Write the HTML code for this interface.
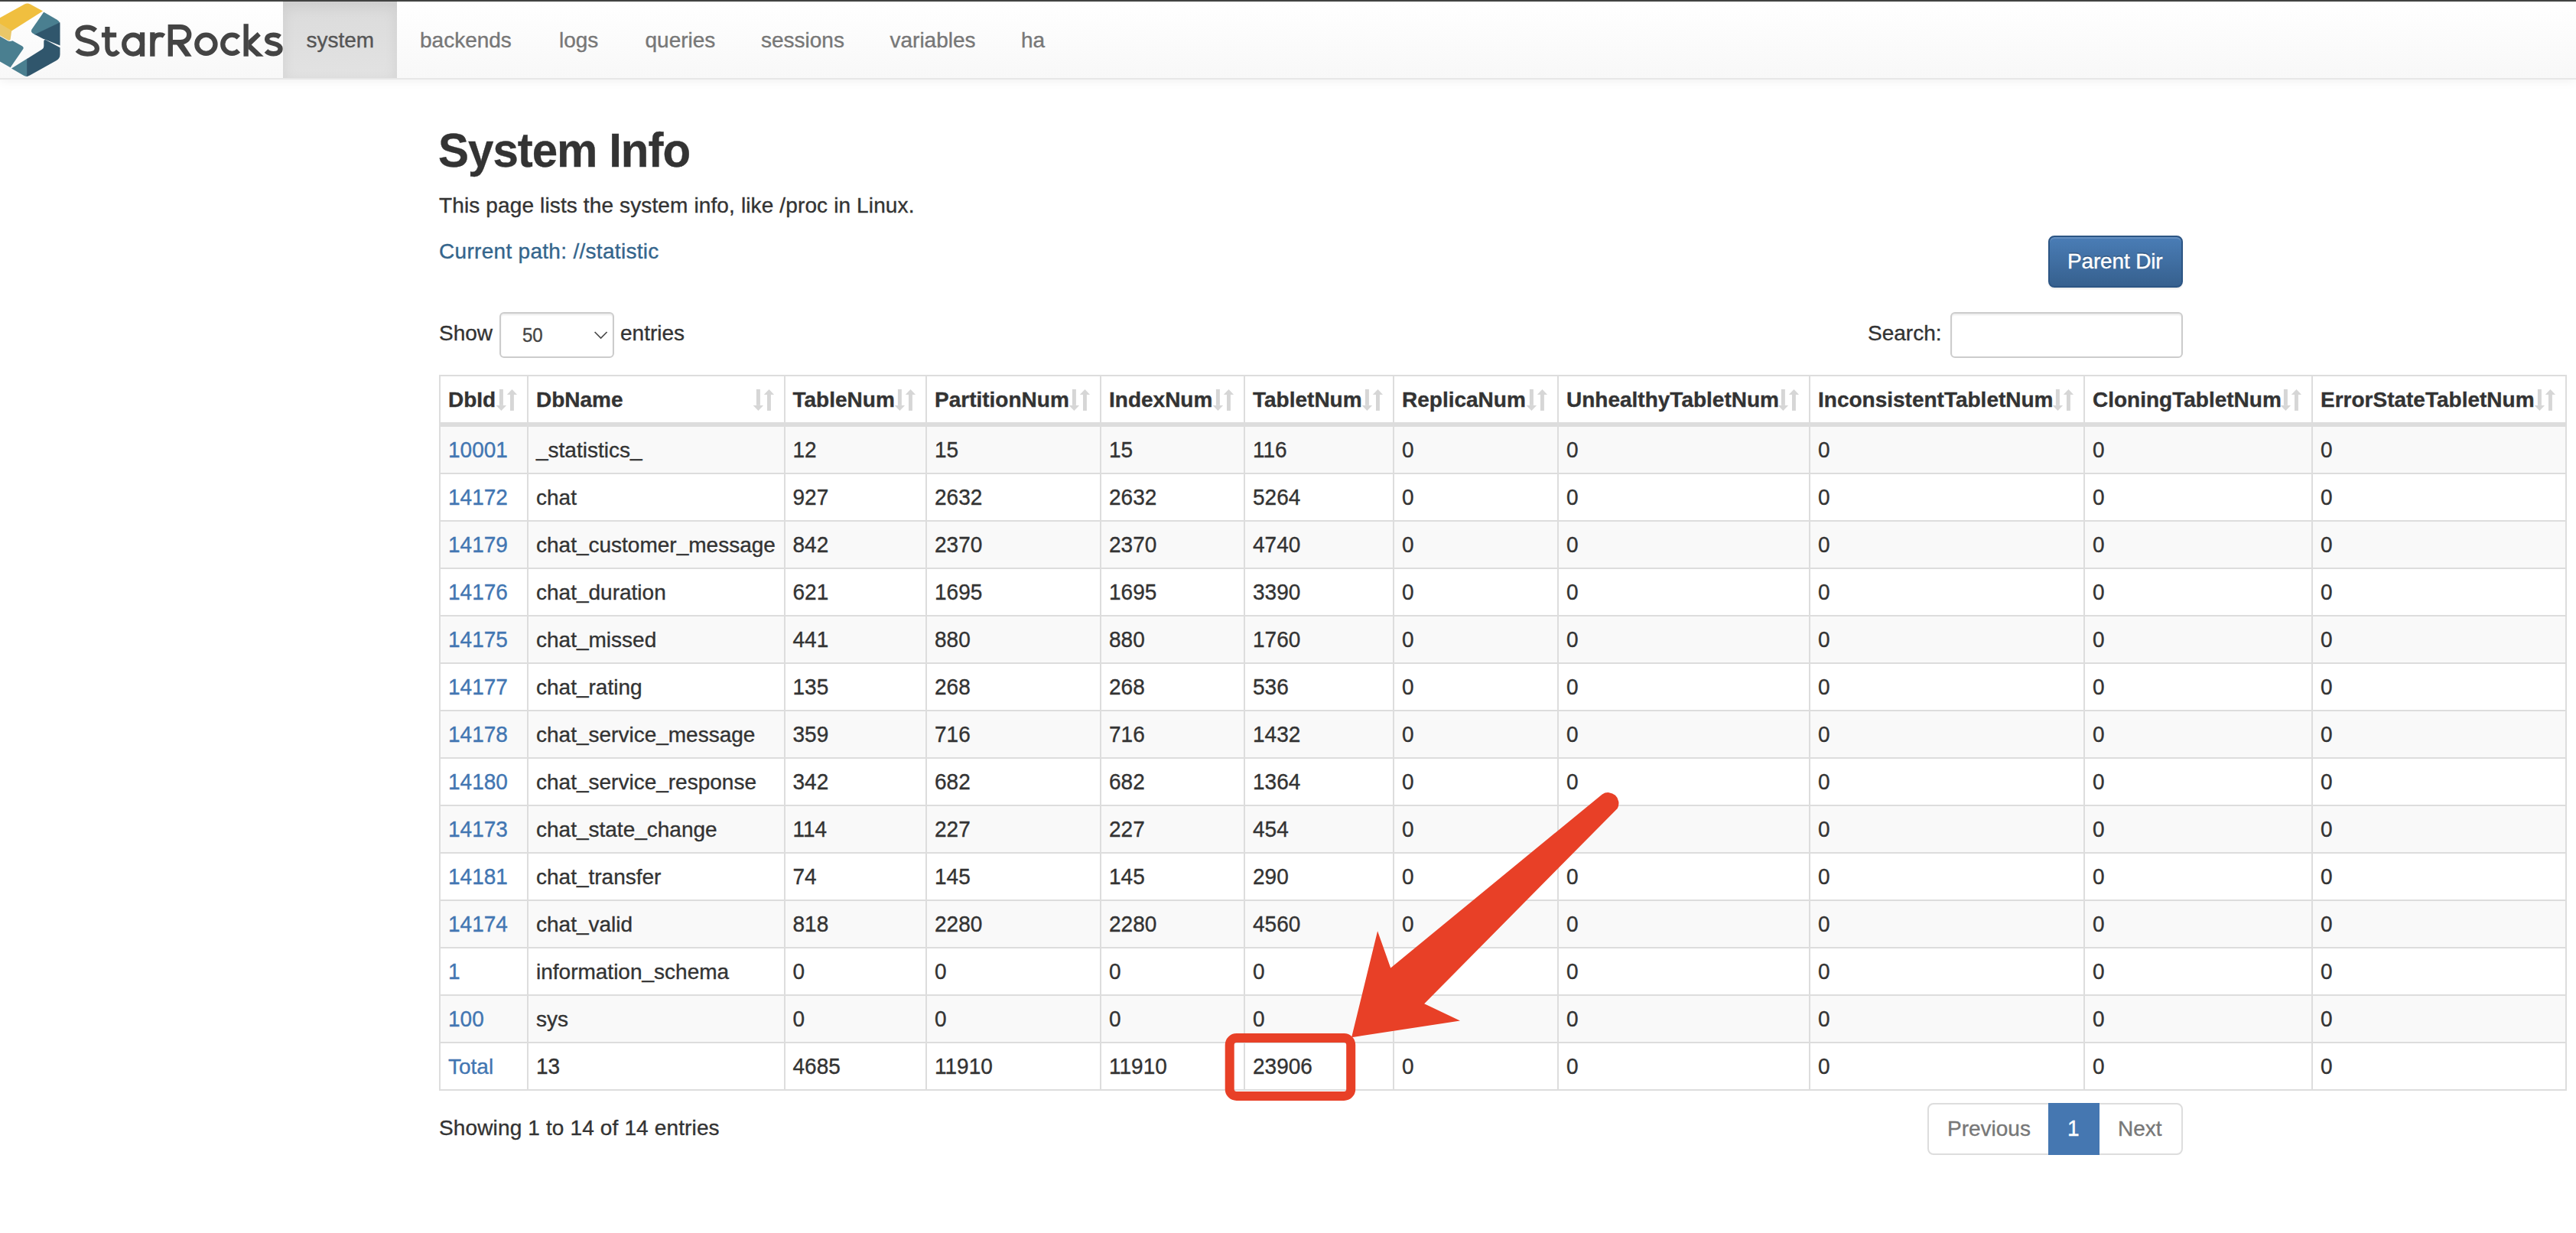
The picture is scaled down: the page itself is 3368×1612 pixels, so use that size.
<!DOCTYPE html>
<html><head><meta charset="utf-8"><title>StarRocks System Info</title><style>
*{margin:0;padding:0;box-sizing:border-box}
html,body{width:3368px;height:1612px;overflow:hidden;background:#fff}
body{position:relative;font-family:"Liberation Sans",sans-serif;color:#333}
.t{position:absolute;white-space:nowrap;-webkit-text-stroke-width:0.35px}
.abs{position:absolute}
</style></head><body>
<div class="abs" style="left:0;top:0;width:3368px;height:1px;background:#484948"></div><div class="abs" style="left:0;top:1px;width:3368px;height:1px;background:#3a3b3a"></div>
<div class="abs" style="left:0;top:2px;width:3368px;height:100px;background:linear-gradient(to bottom,#fff 0%,#f8f8f8 100%);box-shadow:0 2px 14px rgba(0,0,0,.08)"></div>
<div class="abs" style="left:0;top:102px;width:3368px;height:2px;background:#e7e7e7"></div>
<div class="abs" style="left:370px;top:2px;width:149px;height:100px;background:linear-gradient(to bottom,#dbdbdb 0%,#e2e2e2 100%);box-shadow:inset 0 6px 18px rgba(0,0,0,.075)"></div>
<div class="t " style="left:400.5px;top:33.30px;font-size:28px;line-height:40px;color:#555;font-weight:normal;">system</div>
<div class="t " style="left:549px;top:33.30px;font-size:28px;line-height:40px;color:#777;font-weight:normal;">backends</div>
<div class="t " style="left:731px;top:33.30px;font-size:28px;line-height:40px;color:#777;font-weight:normal;">logs</div>
<div class="t " style="left:843.5px;top:33.30px;font-size:28px;line-height:40px;color:#777;font-weight:normal;">queries</div>
<div class="t " style="left:995px;top:33.30px;font-size:28px;line-height:40px;color:#777;font-weight:normal;">sessions</div>
<div class="t " style="left:1163.5px;top:33.30px;font-size:28px;line-height:40px;color:#777;font-weight:normal;">variables</div>
<div class="t " style="left:1335px;top:33.30px;font-size:28px;line-height:40px;color:#777;font-weight:normal;">ha</div>
<svg class="abs" style="left:0;top:0" width="90" height="106" viewBox="0 0 90 106">
<path fill="#f0bf3f" d="M0 23.2 L32 5.6 Q35.7 3.6 39.5 5.6 L56 14.6 L15 40.6 L0 31.8 Z"/>
<path fill="#e9c768" d="M0 31.1 L15.2 39.9 L13.6 51.5 Q13 53.5 10.5 52.6 L0 46.5 Z"/>
<path fill="#4a7f90" d="M57.2 15.8 L74.5 25.8 Q77.5 27.6 78.2 30 L46 45.6 L42 43 Q40 41.3 41.3 38.8 Z"/>
<path fill="#30566c" d="M45.4 45.0 L78.4 29.2 Q78.5 31 78.5 33 L78.5 59.6 L55.5 50.3 Z"/>
<path fill="#4a7f90" d="M0 47.5 L10.5 53.6 Q13 54.5 16.5 53.2 L29 60.2 Q31.5 62 30.3 64 L13.6 88.3 L0 80.6 Z"/>
<path fill="#4a7f90" d="M15 89.6 L35.7 76.5 L35.7 99.9 Q33 100.2 31 98.8 Z"/>
<path fill="#30566c" d="M35.1 76.9 L55 64.5 Q57.3 63 57.3 60.5 L57.3 54 Q57.3 51.3 60 52.2 L78.5 62.3 L78.5 71 Q78.5 76.5 73.5 79.3 L39 98.6 Q36 100.2 35.1 100 Z"/>
</svg>
<svg class="abs" style="left:0;top:0" width="380" height="100" viewBox="0 0 380 100">
<g fill="none" stroke="#444" stroke-width="6.3">
<path d="M125 39.8 C121.5 36.8 118 35.65 113.5 35.65 C106.5 35.65 101.5 39 101.5 44.3 C101.5 49.5 106 51.3 113.5 53.3 C121.5 55.3 126.9 57.8 126.9 63.5 C126.9 68.5 121.5 70.65 114.3 70.65 C108.5 70.65 104 68.8 100.8 65.6"/>
<path d="M140.4 35 L140.4 61 C140.4 67.5 143.5 70.95 147.5 70.95 C150.5 70.95 152.5 69.5 154.5 67"/>
<path d="M132.9 45.7 L152.2 45.7"/>
<ellipse cx="174.1" cy="58.05" rx="11.9" ry="12.5"/>
<path d="M186.05 42.3 L186.05 73.8"/>
<path d="M199.35 73.8 L199.35 42.3 M199.35 58 C199.35 49 204 45.45 209 45.45 C211 45.45 213 46 214.5 47"/>
<path d="M222.8 73.7 L222.8 32.1 M222.8 35.25 L236 35.25 C242.5 35.25 247.25 39.5 247.25 45.25 C247.25 51 242.5 55.25 236 55.25 L222.8 55.25"/>
<circle cx="269.4" cy="57.75" r="12.1"/>
<path d="M311.9 49.2 A12.1 12.1 0 1 0 311.9 66.3"/>
<path d="M321.65 31.2 L321.65 73.7"/>
<path d="M366 48.2 C363.5 46.3 360.5 45.55 357.5 45.55 C352.5 45.55 349.15 47.8 349.15 51.2 C349.15 54.8 353 55.8 358 57 C363 58.2 366.55 59.8 366.55 63.8 C366.55 67.8 362.5 70.25 357.5 70.25 C353.5 70.25 350.3 69 348 66.5"/>
</g>
<g fill="#444">
<path d="M230.5 57.5 L239.8 57.5 L250.7 73.7 L242.3 73.7 Z"/>
<path d="M324.5 52.9 L336.7 42.0 L340.8 46.7 L328.7 58.5 L344.8 73.7 L335.2 73.7 L324.5 63.8 Z"/>
</g>
</svg>
<div class="t " style="left:573px;top:165.41px;font-size:60px;line-height:66px;color:#333;font-weight:bold;letter-spacing:-1.0px;transform:scaleY(1.04);transform-origin:0 53.79px;">System Info</div>
<div class="t " style="left:574px;top:248.60px;font-size:28px;line-height:40px;color:#333;font-weight:normal;letter-spacing:0.13px;">This page lists the system info, like /proc in Linux.</div>
<div class="t " style="left:574px;top:308.90px;font-size:28px;line-height:40px;color:#34658c;font-weight:normal;letter-spacing:0.3px;">Current path: //statistic</div>
<div class="abs" style="left:2678px;top:308px;width:176px;height:68px;border:2px solid #2c5584;border-radius:8px;background:linear-gradient(to bottom,#4a7db6 0%,#36608e 100%);box-shadow:inset 0 2px 0 rgba(255,255,255,.15),0 2px 2px rgba(0,0,0,.075)"></div>
<div class="t " style="left:2703px;top:321.50px;font-size:28px;line-height:40px;color:#fff;font-weight:normal;letter-spacing:-0.15px;text-shadow:0 -2px 0 rgba(0,0,0,.2);">Parent Dir</div>
<div class="t " style="left:574px;top:415.50px;font-size:28px;line-height:40px;color:#333;font-weight:normal;">Show</div>
<div class="abs" style="left:653px;top:408px;width:150px;height:60px;border:2px solid #ccc;border-radius:6px;background:#fff;box-shadow:inset 0 2px 2px rgba(0,0,0,.075)"></div>
<div class="t " style="left:683px;top:419.48px;font-size:24px;line-height:40px;color:#444;font-weight:normal;transform:scaleY(1.04);transform-origin:0 28.32px;">50</div>
<svg class="abs" style="left:776px;top:430px" width="20" height="16" viewBox="0 0 20 16"><path d="M1.6 4 L9.6 12 L17.6 4" fill="none" stroke="#4a4a4a" stroke-width="1.7"/></svg>
<div class="t " style="left:811px;top:415.50px;font-size:28px;line-height:40px;color:#333;font-weight:normal;">entries</div>
<div class="t " style="left:2442px;top:416.10px;font-size:28px;line-height:40px;color:#333;font-weight:normal;">Search:</div>
<div class="abs" style="left:2550px;top:408px;width:304px;height:60px;border:2px solid #ccc;border-radius:6px;background:#fff;box-shadow:inset 0 2px 2px rgba(0,0,0,.075)"></div>
<div class="abs" style="left:574px;top:558px;width:2780px;height:60px;background:#f9f9f9"></div>
<div class="abs" style="left:574px;top:682px;width:2780px;height:60px;background:#f9f9f9"></div>
<div class="abs" style="left:574px;top:806px;width:2780px;height:60px;background:#f9f9f9"></div>
<div class="abs" style="left:574px;top:930px;width:2780px;height:60px;background:#f9f9f9"></div>
<div class="abs" style="left:574px;top:1054px;width:2780px;height:60px;background:#f9f9f9"></div>
<div class="abs" style="left:574px;top:1178px;width:2780px;height:60px;background:#f9f9f9"></div>
<div class="abs" style="left:574px;top:1302px;width:2780px;height:60px;background:#f9f9f9"></div>
<div class="abs" style="left:574px;top:490px;width:2782px;height:2px;background:#dddddd"></div>
<div class="abs" style="left:574px;top:552px;width:2782px;height:6px;background:#dddddd"></div>
<div class="abs" style="left:574px;top:618px;width:2782px;height:2px;background:#dddddd"></div>
<div class="abs" style="left:574px;top:680px;width:2782px;height:2px;background:#dddddd"></div>
<div class="abs" style="left:574px;top:742px;width:2782px;height:2px;background:#dddddd"></div>
<div class="abs" style="left:574px;top:804px;width:2782px;height:2px;background:#dddddd"></div>
<div class="abs" style="left:574px;top:866px;width:2782px;height:2px;background:#dddddd"></div>
<div class="abs" style="left:574px;top:928px;width:2782px;height:2px;background:#dddddd"></div>
<div class="abs" style="left:574px;top:990px;width:2782px;height:2px;background:#dddddd"></div>
<div class="abs" style="left:574px;top:1052px;width:2782px;height:2px;background:#dddddd"></div>
<div class="abs" style="left:574px;top:1114px;width:2782px;height:2px;background:#dddddd"></div>
<div class="abs" style="left:574px;top:1176px;width:2782px;height:2px;background:#dddddd"></div>
<div class="abs" style="left:574px;top:1238px;width:2782px;height:2px;background:#dddddd"></div>
<div class="abs" style="left:574px;top:1300px;width:2782px;height:2px;background:#dddddd"></div>
<div class="abs" style="left:574px;top:1362px;width:2782px;height:2px;background:#dddddd"></div>
<div class="abs" style="left:574px;top:1424px;width:2782px;height:2px;background:#dddddd"></div>
<div class="abs" style="left:574px;top:490px;width:2px;height:936px;background:#dddddd"></div>
<div class="abs" style="left:689px;top:490px;width:2px;height:936px;background:#dddddd"></div>
<div class="abs" style="left:1024.5px;top:490px;width:2px;height:936px;background:#dddddd"></div>
<div class="abs" style="left:1210px;top:490px;width:2px;height:936px;background:#dddddd"></div>
<div class="abs" style="left:1438px;top:490px;width:2px;height:936px;background:#dddddd"></div>
<div class="abs" style="left:1626px;top:490px;width:2px;height:936px;background:#dddddd"></div>
<div class="abs" style="left:1821px;top:490px;width:2px;height:936px;background:#dddddd"></div>
<div class="abs" style="left:2036px;top:490px;width:2px;height:936px;background:#dddddd"></div>
<div class="abs" style="left:2365px;top:490px;width:2px;height:936px;background:#dddddd"></div>
<div class="abs" style="left:2724px;top:490px;width:2px;height:936px;background:#dddddd"></div>
<div class="abs" style="left:3022px;top:490px;width:2px;height:936px;background:#dddddd"></div>
<div class="abs" style="left:3354px;top:490px;width:2px;height:936px;background:#dddddd"></div>
<div class="t " style="left:586px;top:503.30px;font-size:28px;line-height:40px;color:#333;font-weight:bold;">DbId</div>
<svg class="abs" style="left:648px;top:508px" width="30" height="30" viewBox="0 0 30 30"><g fill="#d6d6d6"><rect x="4.9" y="0.9" width="5" height="21"/><path d="M0.7 21.9 L14.1 21.9 L7.4 29 Z"/><rect x="19" y="7.9" width="4.9" height="21"/><path d="M14.8 7.9 L28.1 7.9 L21.5 0.9 Z"/></g></svg>
<div class="t " style="left:701px;top:503.30px;font-size:28px;line-height:40px;color:#333;font-weight:bold;">DbName</div>
<svg class="abs" style="left:983.5px;top:508px" width="30" height="30" viewBox="0 0 30 30"><g fill="#d6d6d6"><rect x="4.9" y="0.9" width="5" height="21"/><path d="M0.7 21.9 L14.1 21.9 L7.4 29 Z"/><rect x="19" y="7.9" width="4.9" height="21"/><path d="M14.8 7.9 L28.1 7.9 L21.5 0.9 Z"/></g></svg>
<div class="t " style="left:1036.5px;top:503.30px;font-size:28px;line-height:40px;color:#333;font-weight:bold;">TableNum</div>
<svg class="abs" style="left:1169px;top:508px" width="30" height="30" viewBox="0 0 30 30"><g fill="#d6d6d6"><rect x="4.9" y="0.9" width="5" height="21"/><path d="M0.7 21.9 L14.1 21.9 L7.4 29 Z"/><rect x="19" y="7.9" width="4.9" height="21"/><path d="M14.8 7.9 L28.1 7.9 L21.5 0.9 Z"/></g></svg>
<div class="t " style="left:1222px;top:503.30px;font-size:28px;line-height:40px;color:#333;font-weight:bold;">PartitionNum</div>
<svg class="abs" style="left:1397px;top:508px" width="30" height="30" viewBox="0 0 30 30"><g fill="#d6d6d6"><rect x="4.9" y="0.9" width="5" height="21"/><path d="M0.7 21.9 L14.1 21.9 L7.4 29 Z"/><rect x="19" y="7.9" width="4.9" height="21"/><path d="M14.8 7.9 L28.1 7.9 L21.5 0.9 Z"/></g></svg>
<div class="t " style="left:1450px;top:503.30px;font-size:28px;line-height:40px;color:#333;font-weight:bold;">IndexNum</div>
<svg class="abs" style="left:1585px;top:508px" width="30" height="30" viewBox="0 0 30 30"><g fill="#d6d6d6"><rect x="4.9" y="0.9" width="5" height="21"/><path d="M0.7 21.9 L14.1 21.9 L7.4 29 Z"/><rect x="19" y="7.9" width="4.9" height="21"/><path d="M14.8 7.9 L28.1 7.9 L21.5 0.9 Z"/></g></svg>
<div class="t " style="left:1638px;top:503.30px;font-size:28px;line-height:40px;color:#333;font-weight:bold;">TabletNum</div>
<svg class="abs" style="left:1780px;top:508px" width="30" height="30" viewBox="0 0 30 30"><g fill="#d6d6d6"><rect x="4.9" y="0.9" width="5" height="21"/><path d="M0.7 21.9 L14.1 21.9 L7.4 29 Z"/><rect x="19" y="7.9" width="4.9" height="21"/><path d="M14.8 7.9 L28.1 7.9 L21.5 0.9 Z"/></g></svg>
<div class="t " style="left:1833px;top:503.30px;font-size:28px;line-height:40px;color:#333;font-weight:bold;">ReplicaNum</div>
<svg class="abs" style="left:1995px;top:508px" width="30" height="30" viewBox="0 0 30 30"><g fill="#d6d6d6"><rect x="4.9" y="0.9" width="5" height="21"/><path d="M0.7 21.9 L14.1 21.9 L7.4 29 Z"/><rect x="19" y="7.9" width="4.9" height="21"/><path d="M14.8 7.9 L28.1 7.9 L21.5 0.9 Z"/></g></svg>
<div class="t " style="left:2048px;top:503.30px;font-size:28px;line-height:40px;color:#333;font-weight:bold;">UnhealthyTabletNum</div>
<svg class="abs" style="left:2324px;top:508px" width="30" height="30" viewBox="0 0 30 30"><g fill="#d6d6d6"><rect x="4.9" y="0.9" width="5" height="21"/><path d="M0.7 21.9 L14.1 21.9 L7.4 29 Z"/><rect x="19" y="7.9" width="4.9" height="21"/><path d="M14.8 7.9 L28.1 7.9 L21.5 0.9 Z"/></g></svg>
<div class="t " style="left:2377px;top:503.30px;font-size:28px;line-height:40px;color:#333;font-weight:bold;">InconsistentTabletNum</div>
<svg class="abs" style="left:2683px;top:508px" width="30" height="30" viewBox="0 0 30 30"><g fill="#d6d6d6"><rect x="4.9" y="0.9" width="5" height="21"/><path d="M0.7 21.9 L14.1 21.9 L7.4 29 Z"/><rect x="19" y="7.9" width="4.9" height="21"/><path d="M14.8 7.9 L28.1 7.9 L21.5 0.9 Z"/></g></svg>
<div class="t " style="left:2736px;top:503.30px;font-size:28px;line-height:40px;color:#333;font-weight:bold;">CloningTabletNum</div>
<svg class="abs" style="left:2981px;top:508px" width="30" height="30" viewBox="0 0 30 30"><g fill="#d6d6d6"><rect x="4.9" y="0.9" width="5" height="21"/><path d="M0.7 21.9 L14.1 21.9 L7.4 29 Z"/><rect x="19" y="7.9" width="4.9" height="21"/><path d="M14.8 7.9 L28.1 7.9 L21.5 0.9 Z"/></g></svg>
<div class="t " style="left:3034px;top:503.30px;font-size:28px;line-height:40px;color:#333;font-weight:bold;">ErrorStateTabletNum</div>
<svg class="abs" style="left:3313px;top:508px" width="30" height="30" viewBox="0 0 30 30"><g fill="#d6d6d6"><rect x="4.9" y="0.9" width="5" height="21"/><path d="M0.7 21.9 L14.1 21.9 L7.4 29 Z"/><rect x="19" y="7.9" width="4.9" height="21"/><path d="M14.8 7.9 L28.1 7.9 L21.5 0.9 Z"/></g></svg>
<div class="t " style="left:586px;top:569.00px;font-size:28px;line-height:40px;color:#4276b2;font-weight:normal;transform:scaleY(1.04);transform-origin:0 29.70px;">10001</div>
<div class="t " style="left:701px;top:569.00px;font-size:28px;line-height:40px;color:#333;font-weight:normal;"><span style="position:relative;top:-2px">_</span>statistics<span style="position:relative;top:-2px">_</span></div>
<div class="t " style="left:1036.5px;top:569.00px;font-size:28px;line-height:40px;color:#333;font-weight:normal;transform:scaleY(1.04);transform-origin:0 29.70px;">12</div>
<div class="t " style="left:1222px;top:569.00px;font-size:28px;line-height:40px;color:#333;font-weight:normal;transform:scaleY(1.04);transform-origin:0 29.70px;">15</div>
<div class="t " style="left:1450px;top:569.00px;font-size:28px;line-height:40px;color:#333;font-weight:normal;transform:scaleY(1.04);transform-origin:0 29.70px;">15</div>
<div class="t " style="left:1638px;top:569.00px;font-size:28px;line-height:40px;color:#333;font-weight:normal;transform:scaleY(1.04);transform-origin:0 29.70px;">116</div>
<div class="t " style="left:1833px;top:569.00px;font-size:28px;line-height:40px;color:#333;font-weight:normal;transform:scaleY(1.04);transform-origin:0 29.70px;">0</div>
<div class="t " style="left:2048px;top:569.00px;font-size:28px;line-height:40px;color:#333;font-weight:normal;transform:scaleY(1.04);transform-origin:0 29.70px;">0</div>
<div class="t " style="left:2377px;top:569.00px;font-size:28px;line-height:40px;color:#333;font-weight:normal;transform:scaleY(1.04);transform-origin:0 29.70px;">0</div>
<div class="t " style="left:2736px;top:569.00px;font-size:28px;line-height:40px;color:#333;font-weight:normal;transform:scaleY(1.04);transform-origin:0 29.70px;">0</div>
<div class="t " style="left:3034px;top:569.00px;font-size:28px;line-height:40px;color:#333;font-weight:normal;transform:scaleY(1.04);transform-origin:0 29.70px;">0</div>
<div class="t " style="left:586px;top:631.00px;font-size:28px;line-height:40px;color:#4276b2;font-weight:normal;transform:scaleY(1.04);transform-origin:0 29.70px;">14172</div>
<div class="t " style="left:701px;top:631.00px;font-size:28px;line-height:40px;color:#333;font-weight:normal;">chat</div>
<div class="t " style="left:1036.5px;top:631.00px;font-size:28px;line-height:40px;color:#333;font-weight:normal;transform:scaleY(1.04);transform-origin:0 29.70px;">927</div>
<div class="t " style="left:1222px;top:631.00px;font-size:28px;line-height:40px;color:#333;font-weight:normal;transform:scaleY(1.04);transform-origin:0 29.70px;">2632</div>
<div class="t " style="left:1450px;top:631.00px;font-size:28px;line-height:40px;color:#333;font-weight:normal;transform:scaleY(1.04);transform-origin:0 29.70px;">2632</div>
<div class="t " style="left:1638px;top:631.00px;font-size:28px;line-height:40px;color:#333;font-weight:normal;transform:scaleY(1.04);transform-origin:0 29.70px;">5264</div>
<div class="t " style="left:1833px;top:631.00px;font-size:28px;line-height:40px;color:#333;font-weight:normal;transform:scaleY(1.04);transform-origin:0 29.70px;">0</div>
<div class="t " style="left:2048px;top:631.00px;font-size:28px;line-height:40px;color:#333;font-weight:normal;transform:scaleY(1.04);transform-origin:0 29.70px;">0</div>
<div class="t " style="left:2377px;top:631.00px;font-size:28px;line-height:40px;color:#333;font-weight:normal;transform:scaleY(1.04);transform-origin:0 29.70px;">0</div>
<div class="t " style="left:2736px;top:631.00px;font-size:28px;line-height:40px;color:#333;font-weight:normal;transform:scaleY(1.04);transform-origin:0 29.70px;">0</div>
<div class="t " style="left:3034px;top:631.00px;font-size:28px;line-height:40px;color:#333;font-weight:normal;transform:scaleY(1.04);transform-origin:0 29.70px;">0</div>
<div class="t " style="left:586px;top:693.00px;font-size:28px;line-height:40px;color:#4276b2;font-weight:normal;transform:scaleY(1.04);transform-origin:0 29.70px;">14179</div>
<div class="t " style="left:701px;top:693.00px;font-size:28px;line-height:40px;color:#333;font-weight:normal;">chat<span style="position:relative;top:-2px">_</span>customer<span style="position:relative;top:-2px">_</span>message</div>
<div class="t " style="left:1036.5px;top:693.00px;font-size:28px;line-height:40px;color:#333;font-weight:normal;transform:scaleY(1.04);transform-origin:0 29.70px;">842</div>
<div class="t " style="left:1222px;top:693.00px;font-size:28px;line-height:40px;color:#333;font-weight:normal;transform:scaleY(1.04);transform-origin:0 29.70px;">2370</div>
<div class="t " style="left:1450px;top:693.00px;font-size:28px;line-height:40px;color:#333;font-weight:normal;transform:scaleY(1.04);transform-origin:0 29.70px;">2370</div>
<div class="t " style="left:1638px;top:693.00px;font-size:28px;line-height:40px;color:#333;font-weight:normal;transform:scaleY(1.04);transform-origin:0 29.70px;">4740</div>
<div class="t " style="left:1833px;top:693.00px;font-size:28px;line-height:40px;color:#333;font-weight:normal;transform:scaleY(1.04);transform-origin:0 29.70px;">0</div>
<div class="t " style="left:2048px;top:693.00px;font-size:28px;line-height:40px;color:#333;font-weight:normal;transform:scaleY(1.04);transform-origin:0 29.70px;">0</div>
<div class="t " style="left:2377px;top:693.00px;font-size:28px;line-height:40px;color:#333;font-weight:normal;transform:scaleY(1.04);transform-origin:0 29.70px;">0</div>
<div class="t " style="left:2736px;top:693.00px;font-size:28px;line-height:40px;color:#333;font-weight:normal;transform:scaleY(1.04);transform-origin:0 29.70px;">0</div>
<div class="t " style="left:3034px;top:693.00px;font-size:28px;line-height:40px;color:#333;font-weight:normal;transform:scaleY(1.04);transform-origin:0 29.70px;">0</div>
<div class="t " style="left:586px;top:755.00px;font-size:28px;line-height:40px;color:#4276b2;font-weight:normal;transform:scaleY(1.04);transform-origin:0 29.70px;">14176</div>
<div class="t " style="left:701px;top:755.00px;font-size:28px;line-height:40px;color:#333;font-weight:normal;">chat<span style="position:relative;top:-2px">_</span>duration</div>
<div class="t " style="left:1036.5px;top:755.00px;font-size:28px;line-height:40px;color:#333;font-weight:normal;transform:scaleY(1.04);transform-origin:0 29.70px;">621</div>
<div class="t " style="left:1222px;top:755.00px;font-size:28px;line-height:40px;color:#333;font-weight:normal;transform:scaleY(1.04);transform-origin:0 29.70px;">1695</div>
<div class="t " style="left:1450px;top:755.00px;font-size:28px;line-height:40px;color:#333;font-weight:normal;transform:scaleY(1.04);transform-origin:0 29.70px;">1695</div>
<div class="t " style="left:1638px;top:755.00px;font-size:28px;line-height:40px;color:#333;font-weight:normal;transform:scaleY(1.04);transform-origin:0 29.70px;">3390</div>
<div class="t " style="left:1833px;top:755.00px;font-size:28px;line-height:40px;color:#333;font-weight:normal;transform:scaleY(1.04);transform-origin:0 29.70px;">0</div>
<div class="t " style="left:2048px;top:755.00px;font-size:28px;line-height:40px;color:#333;font-weight:normal;transform:scaleY(1.04);transform-origin:0 29.70px;">0</div>
<div class="t " style="left:2377px;top:755.00px;font-size:28px;line-height:40px;color:#333;font-weight:normal;transform:scaleY(1.04);transform-origin:0 29.70px;">0</div>
<div class="t " style="left:2736px;top:755.00px;font-size:28px;line-height:40px;color:#333;font-weight:normal;transform:scaleY(1.04);transform-origin:0 29.70px;">0</div>
<div class="t " style="left:3034px;top:755.00px;font-size:28px;line-height:40px;color:#333;font-weight:normal;transform:scaleY(1.04);transform-origin:0 29.70px;">0</div>
<div class="t " style="left:586px;top:817.00px;font-size:28px;line-height:40px;color:#4276b2;font-weight:normal;transform:scaleY(1.04);transform-origin:0 29.70px;">14175</div>
<div class="t " style="left:701px;top:817.00px;font-size:28px;line-height:40px;color:#333;font-weight:normal;">chat<span style="position:relative;top:-2px">_</span>missed</div>
<div class="t " style="left:1036.5px;top:817.00px;font-size:28px;line-height:40px;color:#333;font-weight:normal;transform:scaleY(1.04);transform-origin:0 29.70px;">441</div>
<div class="t " style="left:1222px;top:817.00px;font-size:28px;line-height:40px;color:#333;font-weight:normal;transform:scaleY(1.04);transform-origin:0 29.70px;">880</div>
<div class="t " style="left:1450px;top:817.00px;font-size:28px;line-height:40px;color:#333;font-weight:normal;transform:scaleY(1.04);transform-origin:0 29.70px;">880</div>
<div class="t " style="left:1638px;top:817.00px;font-size:28px;line-height:40px;color:#333;font-weight:normal;transform:scaleY(1.04);transform-origin:0 29.70px;">1760</div>
<div class="t " style="left:1833px;top:817.00px;font-size:28px;line-height:40px;color:#333;font-weight:normal;transform:scaleY(1.04);transform-origin:0 29.70px;">0</div>
<div class="t " style="left:2048px;top:817.00px;font-size:28px;line-height:40px;color:#333;font-weight:normal;transform:scaleY(1.04);transform-origin:0 29.70px;">0</div>
<div class="t " style="left:2377px;top:817.00px;font-size:28px;line-height:40px;color:#333;font-weight:normal;transform:scaleY(1.04);transform-origin:0 29.70px;">0</div>
<div class="t " style="left:2736px;top:817.00px;font-size:28px;line-height:40px;color:#333;font-weight:normal;transform:scaleY(1.04);transform-origin:0 29.70px;">0</div>
<div class="t " style="left:3034px;top:817.00px;font-size:28px;line-height:40px;color:#333;font-weight:normal;transform:scaleY(1.04);transform-origin:0 29.70px;">0</div>
<div class="t " style="left:586px;top:879.00px;font-size:28px;line-height:40px;color:#4276b2;font-weight:normal;transform:scaleY(1.04);transform-origin:0 29.70px;">14177</div>
<div class="t " style="left:701px;top:879.00px;font-size:28px;line-height:40px;color:#333;font-weight:normal;">chat<span style="position:relative;top:-2px">_</span>rating</div>
<div class="t " style="left:1036.5px;top:879.00px;font-size:28px;line-height:40px;color:#333;font-weight:normal;transform:scaleY(1.04);transform-origin:0 29.70px;">135</div>
<div class="t " style="left:1222px;top:879.00px;font-size:28px;line-height:40px;color:#333;font-weight:normal;transform:scaleY(1.04);transform-origin:0 29.70px;">268</div>
<div class="t " style="left:1450px;top:879.00px;font-size:28px;line-height:40px;color:#333;font-weight:normal;transform:scaleY(1.04);transform-origin:0 29.70px;">268</div>
<div class="t " style="left:1638px;top:879.00px;font-size:28px;line-height:40px;color:#333;font-weight:normal;transform:scaleY(1.04);transform-origin:0 29.70px;">536</div>
<div class="t " style="left:1833px;top:879.00px;font-size:28px;line-height:40px;color:#333;font-weight:normal;transform:scaleY(1.04);transform-origin:0 29.70px;">0</div>
<div class="t " style="left:2048px;top:879.00px;font-size:28px;line-height:40px;color:#333;font-weight:normal;transform:scaleY(1.04);transform-origin:0 29.70px;">0</div>
<div class="t " style="left:2377px;top:879.00px;font-size:28px;line-height:40px;color:#333;font-weight:normal;transform:scaleY(1.04);transform-origin:0 29.70px;">0</div>
<div class="t " style="left:2736px;top:879.00px;font-size:28px;line-height:40px;color:#333;font-weight:normal;transform:scaleY(1.04);transform-origin:0 29.70px;">0</div>
<div class="t " style="left:3034px;top:879.00px;font-size:28px;line-height:40px;color:#333;font-weight:normal;transform:scaleY(1.04);transform-origin:0 29.70px;">0</div>
<div class="t " style="left:586px;top:941.00px;font-size:28px;line-height:40px;color:#4276b2;font-weight:normal;transform:scaleY(1.04);transform-origin:0 29.70px;">14178</div>
<div class="t " style="left:701px;top:941.00px;font-size:28px;line-height:40px;color:#333;font-weight:normal;">chat<span style="position:relative;top:-2px">_</span>service<span style="position:relative;top:-2px">_</span>message</div>
<div class="t " style="left:1036.5px;top:941.00px;font-size:28px;line-height:40px;color:#333;font-weight:normal;transform:scaleY(1.04);transform-origin:0 29.70px;">359</div>
<div class="t " style="left:1222px;top:941.00px;font-size:28px;line-height:40px;color:#333;font-weight:normal;transform:scaleY(1.04);transform-origin:0 29.70px;">716</div>
<div class="t " style="left:1450px;top:941.00px;font-size:28px;line-height:40px;color:#333;font-weight:normal;transform:scaleY(1.04);transform-origin:0 29.70px;">716</div>
<div class="t " style="left:1638px;top:941.00px;font-size:28px;line-height:40px;color:#333;font-weight:normal;transform:scaleY(1.04);transform-origin:0 29.70px;">1432</div>
<div class="t " style="left:1833px;top:941.00px;font-size:28px;line-height:40px;color:#333;font-weight:normal;transform:scaleY(1.04);transform-origin:0 29.70px;">0</div>
<div class="t " style="left:2048px;top:941.00px;font-size:28px;line-height:40px;color:#333;font-weight:normal;transform:scaleY(1.04);transform-origin:0 29.70px;">0</div>
<div class="t " style="left:2377px;top:941.00px;font-size:28px;line-height:40px;color:#333;font-weight:normal;transform:scaleY(1.04);transform-origin:0 29.70px;">0</div>
<div class="t " style="left:2736px;top:941.00px;font-size:28px;line-height:40px;color:#333;font-weight:normal;transform:scaleY(1.04);transform-origin:0 29.70px;">0</div>
<div class="t " style="left:3034px;top:941.00px;font-size:28px;line-height:40px;color:#333;font-weight:normal;transform:scaleY(1.04);transform-origin:0 29.70px;">0</div>
<div class="t " style="left:586px;top:1003.00px;font-size:28px;line-height:40px;color:#4276b2;font-weight:normal;transform:scaleY(1.04);transform-origin:0 29.70px;">14180</div>
<div class="t " style="left:701px;top:1003.00px;font-size:28px;line-height:40px;color:#333;font-weight:normal;">chat<span style="position:relative;top:-2px">_</span>service<span style="position:relative;top:-2px">_</span>response</div>
<div class="t " style="left:1036.5px;top:1003.00px;font-size:28px;line-height:40px;color:#333;font-weight:normal;transform:scaleY(1.04);transform-origin:0 29.70px;">342</div>
<div class="t " style="left:1222px;top:1003.00px;font-size:28px;line-height:40px;color:#333;font-weight:normal;transform:scaleY(1.04);transform-origin:0 29.70px;">682</div>
<div class="t " style="left:1450px;top:1003.00px;font-size:28px;line-height:40px;color:#333;font-weight:normal;transform:scaleY(1.04);transform-origin:0 29.70px;">682</div>
<div class="t " style="left:1638px;top:1003.00px;font-size:28px;line-height:40px;color:#333;font-weight:normal;transform:scaleY(1.04);transform-origin:0 29.70px;">1364</div>
<div class="t " style="left:1833px;top:1003.00px;font-size:28px;line-height:40px;color:#333;font-weight:normal;transform:scaleY(1.04);transform-origin:0 29.70px;">0</div>
<div class="t " style="left:2048px;top:1003.00px;font-size:28px;line-height:40px;color:#333;font-weight:normal;transform:scaleY(1.04);transform-origin:0 29.70px;">0</div>
<div class="t " style="left:2377px;top:1003.00px;font-size:28px;line-height:40px;color:#333;font-weight:normal;transform:scaleY(1.04);transform-origin:0 29.70px;">0</div>
<div class="t " style="left:2736px;top:1003.00px;font-size:28px;line-height:40px;color:#333;font-weight:normal;transform:scaleY(1.04);transform-origin:0 29.70px;">0</div>
<div class="t " style="left:3034px;top:1003.00px;font-size:28px;line-height:40px;color:#333;font-weight:normal;transform:scaleY(1.04);transform-origin:0 29.70px;">0</div>
<div class="t " style="left:586px;top:1065.00px;font-size:28px;line-height:40px;color:#4276b2;font-weight:normal;transform:scaleY(1.04);transform-origin:0 29.70px;">14173</div>
<div class="t " style="left:701px;top:1065.00px;font-size:28px;line-height:40px;color:#333;font-weight:normal;">chat<span style="position:relative;top:-2px">_</span>state<span style="position:relative;top:-2px">_</span>change</div>
<div class="t " style="left:1036.5px;top:1065.00px;font-size:28px;line-height:40px;color:#333;font-weight:normal;transform:scaleY(1.04);transform-origin:0 29.70px;">114</div>
<div class="t " style="left:1222px;top:1065.00px;font-size:28px;line-height:40px;color:#333;font-weight:normal;transform:scaleY(1.04);transform-origin:0 29.70px;">227</div>
<div class="t " style="left:1450px;top:1065.00px;font-size:28px;line-height:40px;color:#333;font-weight:normal;transform:scaleY(1.04);transform-origin:0 29.70px;">227</div>
<div class="t " style="left:1638px;top:1065.00px;font-size:28px;line-height:40px;color:#333;font-weight:normal;transform:scaleY(1.04);transform-origin:0 29.70px;">454</div>
<div class="t " style="left:1833px;top:1065.00px;font-size:28px;line-height:40px;color:#333;font-weight:normal;transform:scaleY(1.04);transform-origin:0 29.70px;">0</div>
<div class="t " style="left:2048px;top:1065.00px;font-size:28px;line-height:40px;color:#333;font-weight:normal;transform:scaleY(1.04);transform-origin:0 29.70px;">0</div>
<div class="t " style="left:2377px;top:1065.00px;font-size:28px;line-height:40px;color:#333;font-weight:normal;transform:scaleY(1.04);transform-origin:0 29.70px;">0</div>
<div class="t " style="left:2736px;top:1065.00px;font-size:28px;line-height:40px;color:#333;font-weight:normal;transform:scaleY(1.04);transform-origin:0 29.70px;">0</div>
<div class="t " style="left:3034px;top:1065.00px;font-size:28px;line-height:40px;color:#333;font-weight:normal;transform:scaleY(1.04);transform-origin:0 29.70px;">0</div>
<div class="t " style="left:586px;top:1127.00px;font-size:28px;line-height:40px;color:#4276b2;font-weight:normal;transform:scaleY(1.04);transform-origin:0 29.70px;">14181</div>
<div class="t " style="left:701px;top:1127.00px;font-size:28px;line-height:40px;color:#333;font-weight:normal;">chat<span style="position:relative;top:-2px">_</span>transfer</div>
<div class="t " style="left:1036.5px;top:1127.00px;font-size:28px;line-height:40px;color:#333;font-weight:normal;transform:scaleY(1.04);transform-origin:0 29.70px;">74</div>
<div class="t " style="left:1222px;top:1127.00px;font-size:28px;line-height:40px;color:#333;font-weight:normal;transform:scaleY(1.04);transform-origin:0 29.70px;">145</div>
<div class="t " style="left:1450px;top:1127.00px;font-size:28px;line-height:40px;color:#333;font-weight:normal;transform:scaleY(1.04);transform-origin:0 29.70px;">145</div>
<div class="t " style="left:1638px;top:1127.00px;font-size:28px;line-height:40px;color:#333;font-weight:normal;transform:scaleY(1.04);transform-origin:0 29.70px;">290</div>
<div class="t " style="left:1833px;top:1127.00px;font-size:28px;line-height:40px;color:#333;font-weight:normal;transform:scaleY(1.04);transform-origin:0 29.70px;">0</div>
<div class="t " style="left:2048px;top:1127.00px;font-size:28px;line-height:40px;color:#333;font-weight:normal;transform:scaleY(1.04);transform-origin:0 29.70px;">0</div>
<div class="t " style="left:2377px;top:1127.00px;font-size:28px;line-height:40px;color:#333;font-weight:normal;transform:scaleY(1.04);transform-origin:0 29.70px;">0</div>
<div class="t " style="left:2736px;top:1127.00px;font-size:28px;line-height:40px;color:#333;font-weight:normal;transform:scaleY(1.04);transform-origin:0 29.70px;">0</div>
<div class="t " style="left:3034px;top:1127.00px;font-size:28px;line-height:40px;color:#333;font-weight:normal;transform:scaleY(1.04);transform-origin:0 29.70px;">0</div>
<div class="t " style="left:586px;top:1189.00px;font-size:28px;line-height:40px;color:#4276b2;font-weight:normal;transform:scaleY(1.04);transform-origin:0 29.70px;">14174</div>
<div class="t " style="left:701px;top:1189.00px;font-size:28px;line-height:40px;color:#333;font-weight:normal;">chat<span style="position:relative;top:-2px">_</span>valid</div>
<div class="t " style="left:1036.5px;top:1189.00px;font-size:28px;line-height:40px;color:#333;font-weight:normal;transform:scaleY(1.04);transform-origin:0 29.70px;">818</div>
<div class="t " style="left:1222px;top:1189.00px;font-size:28px;line-height:40px;color:#333;font-weight:normal;transform:scaleY(1.04);transform-origin:0 29.70px;">2280</div>
<div class="t " style="left:1450px;top:1189.00px;font-size:28px;line-height:40px;color:#333;font-weight:normal;transform:scaleY(1.04);transform-origin:0 29.70px;">2280</div>
<div class="t " style="left:1638px;top:1189.00px;font-size:28px;line-height:40px;color:#333;font-weight:normal;transform:scaleY(1.04);transform-origin:0 29.70px;">4560</div>
<div class="t " style="left:1833px;top:1189.00px;font-size:28px;line-height:40px;color:#333;font-weight:normal;transform:scaleY(1.04);transform-origin:0 29.70px;">0</div>
<div class="t " style="left:2048px;top:1189.00px;font-size:28px;line-height:40px;color:#333;font-weight:normal;transform:scaleY(1.04);transform-origin:0 29.70px;">0</div>
<div class="t " style="left:2377px;top:1189.00px;font-size:28px;line-height:40px;color:#333;font-weight:normal;transform:scaleY(1.04);transform-origin:0 29.70px;">0</div>
<div class="t " style="left:2736px;top:1189.00px;font-size:28px;line-height:40px;color:#333;font-weight:normal;transform:scaleY(1.04);transform-origin:0 29.70px;">0</div>
<div class="t " style="left:3034px;top:1189.00px;font-size:28px;line-height:40px;color:#333;font-weight:normal;transform:scaleY(1.04);transform-origin:0 29.70px;">0</div>
<div class="t " style="left:586px;top:1251.00px;font-size:28px;line-height:40px;color:#4276b2;font-weight:normal;transform:scaleY(1.04);transform-origin:0 29.70px;">1</div>
<div class="t " style="left:701px;top:1251.00px;font-size:28px;line-height:40px;color:#333;font-weight:normal;">information<span style="position:relative;top:-2px">_</span>schema</div>
<div class="t " style="left:1036.5px;top:1251.00px;font-size:28px;line-height:40px;color:#333;font-weight:normal;transform:scaleY(1.04);transform-origin:0 29.70px;">0</div>
<div class="t " style="left:1222px;top:1251.00px;font-size:28px;line-height:40px;color:#333;font-weight:normal;transform:scaleY(1.04);transform-origin:0 29.70px;">0</div>
<div class="t " style="left:1450px;top:1251.00px;font-size:28px;line-height:40px;color:#333;font-weight:normal;transform:scaleY(1.04);transform-origin:0 29.70px;">0</div>
<div class="t " style="left:1638px;top:1251.00px;font-size:28px;line-height:40px;color:#333;font-weight:normal;transform:scaleY(1.04);transform-origin:0 29.70px;">0</div>
<div class="t " style="left:1833px;top:1251.00px;font-size:28px;line-height:40px;color:#333;font-weight:normal;transform:scaleY(1.04);transform-origin:0 29.70px;">0</div>
<div class="t " style="left:2048px;top:1251.00px;font-size:28px;line-height:40px;color:#333;font-weight:normal;transform:scaleY(1.04);transform-origin:0 29.70px;">0</div>
<div class="t " style="left:2377px;top:1251.00px;font-size:28px;line-height:40px;color:#333;font-weight:normal;transform:scaleY(1.04);transform-origin:0 29.70px;">0</div>
<div class="t " style="left:2736px;top:1251.00px;font-size:28px;line-height:40px;color:#333;font-weight:normal;transform:scaleY(1.04);transform-origin:0 29.70px;">0</div>
<div class="t " style="left:3034px;top:1251.00px;font-size:28px;line-height:40px;color:#333;font-weight:normal;transform:scaleY(1.04);transform-origin:0 29.70px;">0</div>
<div class="t " style="left:586px;top:1313.00px;font-size:28px;line-height:40px;color:#4276b2;font-weight:normal;transform:scaleY(1.04);transform-origin:0 29.70px;">100</div>
<div class="t " style="left:701px;top:1313.00px;font-size:28px;line-height:40px;color:#333;font-weight:normal;">sys</div>
<div class="t " style="left:1036.5px;top:1313.00px;font-size:28px;line-height:40px;color:#333;font-weight:normal;transform:scaleY(1.04);transform-origin:0 29.70px;">0</div>
<div class="t " style="left:1222px;top:1313.00px;font-size:28px;line-height:40px;color:#333;font-weight:normal;transform:scaleY(1.04);transform-origin:0 29.70px;">0</div>
<div class="t " style="left:1450px;top:1313.00px;font-size:28px;line-height:40px;color:#333;font-weight:normal;transform:scaleY(1.04);transform-origin:0 29.70px;">0</div>
<div class="t " style="left:1638px;top:1313.00px;font-size:28px;line-height:40px;color:#333;font-weight:normal;transform:scaleY(1.04);transform-origin:0 29.70px;">0</div>
<div class="t " style="left:1833px;top:1313.00px;font-size:28px;line-height:40px;color:#333;font-weight:normal;transform:scaleY(1.04);transform-origin:0 29.70px;">0</div>
<div class="t " style="left:2048px;top:1313.00px;font-size:28px;line-height:40px;color:#333;font-weight:normal;transform:scaleY(1.04);transform-origin:0 29.70px;">0</div>
<div class="t " style="left:2377px;top:1313.00px;font-size:28px;line-height:40px;color:#333;font-weight:normal;transform:scaleY(1.04);transform-origin:0 29.70px;">0</div>
<div class="t " style="left:2736px;top:1313.00px;font-size:28px;line-height:40px;color:#333;font-weight:normal;transform:scaleY(1.04);transform-origin:0 29.70px;">0</div>
<div class="t " style="left:3034px;top:1313.00px;font-size:28px;line-height:40px;color:#333;font-weight:normal;transform:scaleY(1.04);transform-origin:0 29.70px;">0</div>
<div class="t " style="left:586px;top:1375.00px;font-size:28px;line-height:40px;color:#4276b2;font-weight:normal;">Total</div>
<div class="t " style="left:701px;top:1375.00px;font-size:28px;line-height:40px;color:#333;font-weight:normal;transform:scaleY(1.04);transform-origin:0 29.70px;">13</div>
<div class="t " style="left:1036.5px;top:1375.00px;font-size:28px;line-height:40px;color:#333;font-weight:normal;transform:scaleY(1.04);transform-origin:0 29.70px;">4685</div>
<div class="t " style="left:1222px;top:1375.00px;font-size:28px;line-height:40px;color:#333;font-weight:normal;transform:scaleY(1.04);transform-origin:0 29.70px;">11910</div>
<div class="t " style="left:1450px;top:1375.00px;font-size:28px;line-height:40px;color:#333;font-weight:normal;transform:scaleY(1.04);transform-origin:0 29.70px;">11910</div>
<div class="t " style="left:1638px;top:1375.00px;font-size:28px;line-height:40px;color:#333;font-weight:normal;transform:scaleY(1.04);transform-origin:0 29.70px;">23906</div>
<div class="t " style="left:1833px;top:1375.00px;font-size:28px;line-height:40px;color:#333;font-weight:normal;transform:scaleY(1.04);transform-origin:0 29.70px;">0</div>
<div class="t " style="left:2048px;top:1375.00px;font-size:28px;line-height:40px;color:#333;font-weight:normal;transform:scaleY(1.04);transform-origin:0 29.70px;">0</div>
<div class="t " style="left:2377px;top:1375.00px;font-size:28px;line-height:40px;color:#333;font-weight:normal;transform:scaleY(1.04);transform-origin:0 29.70px;">0</div>
<div class="t " style="left:2736px;top:1375.00px;font-size:28px;line-height:40px;color:#333;font-weight:normal;transform:scaleY(1.04);transform-origin:0 29.70px;">0</div>
<div class="t " style="left:3034px;top:1375.00px;font-size:28px;line-height:40px;color:#333;font-weight:normal;transform:scaleY(1.04);transform-origin:0 29.70px;">0</div>
<div class="t " style="left:574px;top:1454.60px;font-size:28px;line-height:40px;color:#333;font-weight:normal;letter-spacing:0.14px;">Showing 1 to 14 of 14 entries</div>
<div class="abs" style="left:2520px;top:1442px;width:334px;height:68px;border:2px solid #ddd;border-radius:8px;background:#fff"></div>
<div class="abs" style="left:2678px;top:1442px;width:67px;height:68px;background:#4577b1"></div>
<div class="t " style="left:2546px;top:1456.30px;font-size:28px;line-height:40px;color:#777;font-weight:normal;">Previous</div>
<div class="t " style="left:2703px;top:1456.30px;font-size:28px;line-height:40px;color:#fff;font-weight:normal;transform:scaleY(1.04);transform-origin:0 29.70px;">1</div>
<div class="t " style="left:2769px;top:1456.30px;font-size:28px;line-height:40px;color:#777;font-weight:normal;">Next</div>
<svg class="abs" style="left:0;top:0" width="3368" height="1612" viewBox="0 0 3368 1612">
<rect x="1607.7" y="1357" width="158.5" height="76" rx="9" ry="9" fill="none" stroke="#e84027" stroke-width="12"/>
<path fill="#e84027" d="M2094.8 1038.4 A14 14 0 0 1 2114.7 1056.9 L1862.2 1312.3 L1909 1334.4 L1767.1 1356.3 L1801.1 1217.2 L1818.2 1265.5 Z"/>
</svg>
</body></html>
